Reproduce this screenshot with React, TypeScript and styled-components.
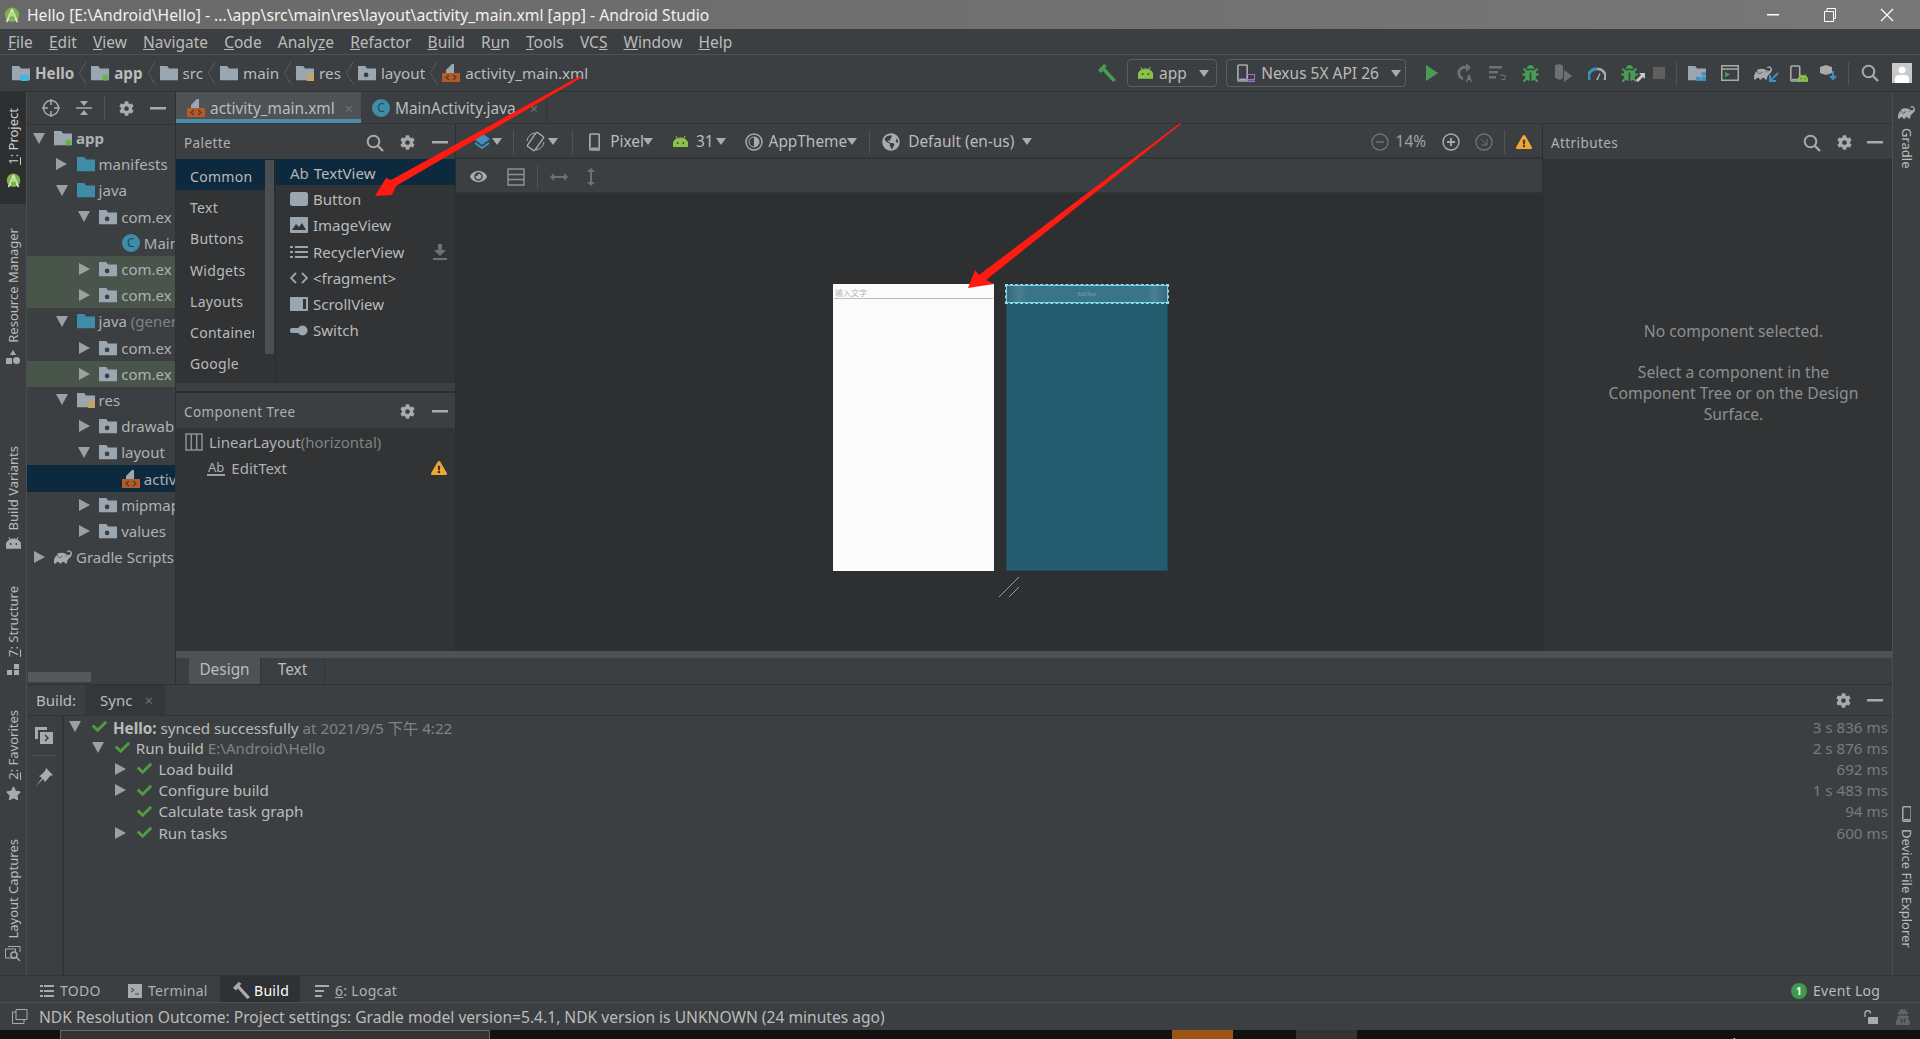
import React from 'react';
import styled, { createGlobalStyle } from 'styled-components';
import { FaCog, FaStar, FaGlobeAmericas, FaCheck, FaEye, FaUserSecret, FaBug, FaExclamationTriangle } from 'react-icons/fa';
import { SiGradle } from 'react-icons/si';

const FONT = `"Noto Sans", "Noto Sans CJK SC", sans-serif`;

const Global = createGlobalStyle`
  html, body { margin: 0; padding: 0; background: #3c3f41; }
  * { box-sizing: border-box; }
  body { font-family: ${FONT}; color: #bbbbbb; font-size: 15px; }
`;

const Page = styled.div`
  position: relative;
  width: 1920px;
  height: 1039px;
  overflow: hidden;
  display: flex;
  flex-direction: column;
  background: #3c3f41;
`;

const TitleBar = styled.div`
  height: 29px;
  flex: none;
  display: flex;
  align-items: center;
  padding: 0 5px 0 4px;
  background: linear-gradient(90deg, #696969, #777777);
  color: #f0f0f0;
  font-size: 15.7px;
  gap: 7px;
`;

const WindowButtons = styled.div`
  margin-left: auto;
  display: flex;
  color: #fff;
`;

const WindowButton = styled.div`
  width: 57px;
  height: 29px;
  display: flex;
  align-items: center;
  justify-content: center;
`;

const MenuBar = styled.div`
  height: 26px;
  flex: none;
  display: flex;
  align-items: center;
  gap: 16.2px;
  padding-left: 8px;
  font-size: 15.5px;
  border-bottom: 1px solid #515151;
`;

const NavBar = styled.div`
  height: 37px;
  flex: none;
  display: flex;
  align-items: center;
  padding-left: 12px;
  border-bottom: 1px solid #2f3133;
  font-size: 15.2px;
`;

const Crumb = styled.span<{ $bold?: boolean }>`
  display: flex;
  align-items: center;
  gap: 5px;
  font-weight: ${(p) => (p.$bold ? 700 : 400)};
`;

const CrumbSep = styled.span`
  width: 7px;
  height: 22px;
  margin: 0 5px;
  background: linear-gradient(to bottom right, transparent 48%, #55585a 48%, #55585a 56%, transparent 56%) top / 100% 50% no-repeat,
    linear-gradient(to top right, transparent 48%, #55585a 48%, #55585a 56%, transparent 56%) bottom / 100% 50% no-repeat;
`;

const NavRight = styled.div`
  margin-left: auto;
  display: flex;
  align-items: center;
  padding-right: 5px;
`;

const Combo = styled.div<{ $w: number }>`
  width: ${(p) => p.$w}px;
  height: 28px;
  margin-right: 9px;
  border: 1.5px solid #5b5e60;
  border-radius: 4px;
  display: flex;
  align-items: center;
  padding-left: 10px;
  gap: 6px;
  font-size: 15.5px;
  white-space: nowrap;
`;

const Slot = styled.div<{ $w?: number }>`
  width: ${(p) => p.$w ?? 33}px;
  flex: none;
  display: flex;
  align-items: center;
  justify-content: center;
`;

const VSep = styled.div<{ $h?: number; $m?: number }>`
  width: 1px;
  height: ${(p) => p.$h ?? 24}px;
  flex: none;
  margin: 0 ${(p) => p.$m ?? 0}px;
  background: #515456;
`;

const Caret = styled.span<{ $dim?: boolean; $ml?: number }>`
  width: 0;
  height: 0;
  flex: none;
  margin-left: ${(p) => p.$ml ?? 0}px;
  border-left: 5.5px solid transparent;
  border-right: 5.5px solid transparent;
  border-top: 7px solid ${(p) => (p.$dim ? '#8a8d8f' : '#a9abad')};
`;

const Spacer = styled.span<{ $w?: number }>`
  flex: ${(p) => (p.$w ? 'none' : 1)};
  width: ${(p) => p.$w ?? 0}px;
`;

const PushRight = styled.span`
  margin-left: auto;
  display: flex;
`;

const Main = styled.div`
  height: 883px;
  flex: none;
  display: flex;
`;

const Stripe = styled.div<{ $right?: boolean }>`
  width: ${(p) => (p.$right ? 28 : 27)}px;
  flex: none;
  display: flex;
  flex-direction: column;
  align-items: center;
  border-${(p) => (p.$right ? 'left' : 'right')}: 1px solid #4c4f51;
  font-size: 13px;
`;

const StripeItem = styled.div<{ $top: number; $active?: boolean; $pad?: number }>`
  margin-top: ${(p) => p.$top}px;
  width: 100%;
  display: flex;
  flex-direction: column;
  align-items: center;
  gap: 7px;
  padding: ${(p) => p.$pad ?? 0}px 0;
  background: ${(p) => (p.$active ? '#2d2f31' : 'transparent')};
  color: ${(p) => (p.$active ? '#d0d0d0' : '#bbbbbb')};
`;

const SideText = styled.span<{ $down?: boolean }>`
  writing-mode: vertical-rl;
  transform: ${(p) => (p.$down ? 'none' : 'rotate(180deg)')};
  white-space: nowrap;
  line-height: 16px;
`;

const Center = styled.div`
  flex: 1;
  min-width: 0;
  display: flex;
  flex-direction: column;
`;

const Upper = styled.div`
  height: 592px;
  flex: none;
  display: flex;
`;

const ProjectPanel = styled.div`
  width: 149px;
  flex: none;
  position: relative;
  overflow: hidden;
  border-right: 1px solid #2f3133;
`;

const PanelHead = styled.div`
  height: 33px;
  display: flex;
  align-items: center;
  padding-left: 8px;
  border-bottom: 1px solid #323436;
`;

const TreeRow = styled.div<{ $level: number; $tone?: 'module' | 'selected' }>`
  height: 26.2px;
  display: flex;
  align-items: center;
  padding-left: ${(p) => 4 + p.$level * 22.6}px;
  white-space: nowrap;
  overflow: hidden;
  background: ${(p) => (p.$tone === 'module' ? '#49544a' : p.$tone === 'selected' ? '#0d293e' : 'transparent')};
`;

const ArrowSlot = styled.span`
  width: 16px;
  margin-right: 7px;
  flex: none;
  display: flex;
  justify-content: center;
`;

const Tri = styled.span<{ $open?: boolean }>`
  width: 0;
  height: 0;
  ${(p) =>
    p.$open
      ? `border-left:6px solid transparent;border-right:6px solid transparent;border-top:11px solid #9da0a2;`
      : `border-top:6px solid transparent;border-bottom:6px solid transparent;border-left:11px solid #9da0a2;`}
`;

const TreeLabel = styled.span`
  margin-left: 4px;
  color: #afb1b3;
`;

const HScroll = styled.div`
  position: absolute;
  left: 1px;
  bottom: 2px;
  width: 63px;
  height: 10px;
  background: #55585a;
`;

const Editor = styled.div`
  flex: 1;
  min-width: 0;
  display: flex;
  flex-direction: column;
`;

const Tabs = styled.div`
  height: 32px;
  flex: none;
  display: flex;
  border-bottom: 1px solid #323436;
`;

const Tab = styled.div<{ $active?: boolean }>`
  width: ${(p) => (p.$active ? 185 : 186)}px;
  display: flex;
  align-items: center;
  padding: 1px 0 0 11px;
  gap: 5px;
  background: ${(p) => (p.$active ? '#4e5254' : 'transparent')};
  box-shadow: ${(p) => (p.$active ? 'inset 0 -4px 0 #4a8dab' : 'none')};
  border-right: ${(p) => (p.$active ? 'none' : '1px solid #323436')};
  font-size: 15.4px;
`;

const Close = styled.span<{ $mr?: number }>`
  margin-left: auto;
  margin-right: ${(p) => p.$mr ?? 8}px;
  color: #6c6f71;
  font-size: 15px;
`;

const Surface = styled.div`
  height: 527px;
  flex: none;
  display: flex;
`;

const Side = styled.div`
  width: 280px;
  flex: none;
  display: flex;
  flex-direction: column;
  background: #313335;
  border-right: 1px solid #2b2d2e;
`;

const SideHead = styled.div`
  height: 35px;
  flex: none;
  display: flex;
  align-items: center;
  padding: 2px 0 0 8px;
  background: #3c3f41;
  font-size: 13.5px;
  letter-spacing: 0.4px;
  color: #afb1b3;
`;

const HeadTools = styled.div<{ $mr?: number }>`
  margin-left: auto;
  margin-right: ${(p) => p.$mr ?? 0}px;
  display: flex;
  align-items: center;
`;

const PaletteBody = styled.div`
  height: 224px;
  flex: none;
  display: flex;
`;

const Categories = styled.div`
  width: 100px;
  flex: none;
  position: relative;
  border-right: 1px solid #2b2d2e;
`;

const Category = styled.div<{ $on?: boolean }>`
  height: 31.3px;
  display: flex;
  align-items: center;
  padding: 3px 0 0 14px;
  font-size: 14px;
  letter-spacing: 0.3px;
  background: ${(p) => (p.$on ? '#0d293e' : 'transparent')};
  white-space: nowrap;
  overflow: hidden;
`;

const CategoryText = styled.span`
  display: block;
  width: 64px;
  overflow: hidden;
`;

const CatScroll = styled.div`
  position: absolute;
  right: 1px;
  top: 1px;
  width: 9px;
  height: 194px;
  background: #4b4f52;
`;

const Widgets = styled.div`
  flex: 1;
  min-width: 0;
`;

const Widget = styled.div<{ $on?: boolean }>`
  height: 26.2px;
  display: flex;
  align-items: center;
  padding: 2px 8px 0 14px;
  gap: 5px;
  background: ${(p) => (p.$on ? '#0d293e' : 'transparent')};
`;

const SideDivider = styled.div`
  height: 10px;
  flex: none;
  background: #3c3f41;
  border-bottom: 2px solid #2b2d2e;
`;

const CompList = styled.div`
  padding-top: 1.5px;
`;

const CompRow = styled.div<{ $indent?: boolean }>`
  height: 25.5px;
  display: flex;
  align-items: center;
  gap: 6px;
  padding: 0 8px 0 ${(p) => (p.$indent ? 31 : 9)}px;
  color: #afb1b3;
`;

const Grey = styled.span<{ $tight?: boolean }>`
  color: #808386;
  margin-left: ${(p) => (p.$tight ? -6 : 0)}px;
`;

const DesignArea = styled.div`
  flex: 1;
  min-width: 0;
  display: flex;
  flex-direction: column;
`;

const DesignBar = styled.div`
  height: 35px;
  flex: none;
  display: flex;
  align-items: center;
  padding-top: 2px;
  border-bottom: 2px solid #313335;
  font-size: 15.4px;
`;

const BarItem = styled.div<{ $gap?: number; $ml?: number }>`
  display: flex;
  align-items: center;
  gap: ${(p) => p.$gap ?? 4}px;
  margin-left: ${(p) => p.$ml ?? 0}px;
  white-space: nowrap;
`;

const ZoomTools = styled(BarItem)`
  margin-left: auto;
  margin-right: 10px;
`;

const ZoomValue = styled.span`
  color: #a0a3a5;
`;

const Canvas = styled.div`
  flex: 1;
  background: #2d2f31;
  padding: 89px 0 0 377px;
  border-top: 1px solid #2b2d2e;
`;

const Screens = styled.div`
  display: flex;
  gap: 12px;
`;

const Screen = styled.div`
  width: 161px;
  height: 287px;
  background: #fbfbfb;
  padding: 3px 1px 0;
`;

const Hint = styled.div`
  font-size: 8px;
  line-height: 10px;
  padding: 1px 1px 0;
  color: #b4b4b4;
  border-bottom: 1px solid #bdbdbd;
`;

const Blueprint = styled.div`
  width: 162px;
  height: 287px;
  background: #245c70;
  border: 1px solid #1f4b5c;
`;

const BlueField = styled.div`
  height: 18px;
  margin: 0 -1px;
  background: linear-gradient(90deg, #37687c 0, #4a7f92 8%, #3a7488 12%, #3a7488 88%, #4a7f92 92%, #37687c 100%);
  outline: 1px dashed #8fdcef;
  border: 1px solid #7ed0e4;
  display: flex;
  align-items: center;
  justify-content: center;
  font-size: 5px;
  color: #6fa4b3;
`;

const Resize = styled.div`
  margin: 5px 0 0 165px;
  width: 22px;
  height: 22px;
`;

const Attributes = styled.div`
  width: 350px;
  flex: none;
  display: flex;
  flex-direction: column;
  background: #313335;
  border-left: 1px solid #2b2d2e;
`;

const AttrBody = styled.div`
  flex: 1;
  padding: 162px 0 0 32px;
  text-align: center;
  color: #8c8f91;
  font-size: 15.7px;
  line-height: 21px;
`;

const AttrPara = styled.p`
  margin: 0 0 20px;
`;

const DesignTabs = styled.div`
  height: 33px;
  flex: none;
  display: flex;
  padding-left: 13px;
  border-top: 7px solid #4e5254;
  background: #3c3f41;
  font-size: 15.4px;
`;

const DesignTab = styled.div<{ $on?: boolean; $w: number }>`
  width: ${(p) => p.$w}px;
  display: flex;
  align-items: center;
  justify-content: center;
  padding-bottom: 4px;
  background: ${(p) => (p.$on ? '#4e5254' : 'transparent')};
  border-right: 1px solid #323436;
`;

const BuildPanel = styled.div`
  flex: 1;
  display: flex;
  flex-direction: column;
  border-top: 1px solid #2f3133;
`;

const BuildHead = styled.div`
  height: 31px;
  flex: none;
  display: flex;
  align-items: center;
  padding-left: 9px;
  border-bottom: 1px solid #323436;
`;

const SyncTab = styled.div`
  margin-left: 9px;
  height: 100%;
  width: 80px;
  display: flex;
  align-items: center;
  padding-left: 15px;
  background: #34373a;
`;

const BuildBody = styled.div`
  flex: 1;
  display: flex;
`;

const Actions = styled.div`
  width: 37px;
  flex: none;
  display: flex;
  flex-direction: column;
  align-items: center;
  padding-top: 11px;
  padding-right: 2px;
  border-right: 2px solid #323436;
`;

const ActionSep = styled.div`
  width: 24px;
  height: 1px;
  margin: 11px 0 12px;
  background: #515456;
`;

const BuildRows = styled.div`
  flex: 1;
  padding-right: 4px;
  font-size: 15.2px;
`;

const BuildRow = styled.div<{ $level: number }>`
  height: 21.2px;
  display: flex;
  align-items: center;
  padding-left: ${(p) => 3 + p.$level * 22.7}px;
  white-space: nowrap;
`;

const BuildArrow = styled.span`
  width: 16px;
  margin-right: 9px;
  flex: none;
  display: flex;
  justify-content: center;
`;

const Ok = styled.span`
  width: 16px;
  margin-right: 5px;
  flex: none;
  display: flex;
  color: #4f9c45;
`;

const Duration = styled.span`
  margin-left: auto;
  color: #787b7d;
`;

const BottomTools = styled.div`
  height: 28px;
  flex: none;
  display: flex;
  align-items: stretch;
  padding-left: 40px;
  font-size: 14px;
  letter-spacing: 0.3px;
  border-top: 1px solid #323436;
  border-bottom: 1px solid #4c4f51;
`;

const ToolTab = styled.div<{ $on?: boolean; $w: number; $ml?: number }>`
  width: ${(p) => p.$w}px;
  margin-left: ${(p) => p.$ml ?? 0}px;
  display: flex;
  align-items: center;
  gap: ${(p) => (p.$on ? 3 : 6)}px;
  padding-left: ${(p) => (p.$on ? 12 : 0)}px;
  padding-top: 3px;
  background: ${(p) => (p.$on ? '#2f3234' : 'transparent')};
  color: ${(p) => (p.$on ? '#ffffff' : '#afb1b3')};
`;

const EventLog = styled.div`
  margin-left: auto;
  width: 129px;
  padding-top: 3px;
  display: flex;
  align-items: center;
  gap: 6px;
`;

const Badge = styled.span`
  width: 16px;
  height: 16px;
  border-radius: 50%;
  background: #3f9a4f;
  color: #fff;
  font-size: 10px;
  font-weight: 700;
  display: flex;
  align-items: center;
  justify-content: center;
`;

const StatusBar = styled.div`
  height: 27px;
  flex: none;
  display: flex;
  align-items: center;
  padding-left: 12px;
  gap: 11px;
  font-size: 15.6px;
`;

const StatusRight = styled.div`
  margin-left: auto;
  display: flex;
  align-items: center;
  gap: 17px;
  padding-right: 9px;
`;

const Taskbar = styled.div`
  height: 9px;
  flex: none;
  display: flex;
  background: #111111;
  overflow: hidden;
  position: relative;
`;

const TaskItem = styled.div<{ $w: number; $ml: number; $bg: string; $line?: boolean }>`
  width: ${(p) => p.$w}px;
  margin-left: ${(p) => p.$ml}px;
  background: ${(p) => p.$bg};
  ${(p) => (p.$line ? 'border: 1px solid #6a6a6a; border-bottom: none;' : '')}
`;

const Clock = styled.span`
  margin-left: 358px;
  margin-top: 6px;
  color: #ffffff;
  font-size: 15px;
  line-height: 18px;
  white-space: nowrap;
`;

const ArrowLayer = styled.svg`
  position: absolute;
  inset: 0;
  width: 1920px;
  height: 1039px;
  pointer-events: none;
`;

const ClassBadge = styled.span`
  width: 18px;
  height: 18px;
  border-radius: 50%;
  flex: none;
  background: #3f8ca8;
  color: #21495a;
  font-size: 12px;
  line-height: 18px;
  text-align: center;
`;

const AbMark = styled.span<{ $under?: boolean }>`
  font-size: ${(p) => (p.$under ? 13 : 15)}px;
  line-height: 14px;
  color: #afb1b3;
  ${(p) => (p.$under ? 'border-bottom: 2px solid #9da0a2; padding: 0 1px;' : '')}
`;

const IconWrap = styled.span`
  display: flex;
  position: relative;
  flex: none;
`;

const TinyBadge = styled.span`
  position: absolute;
  right: -7px;
  bottom: 0;
  display: flex;
`;

const G = '#a8abad';
const M = '#6e7072';

const Folder = ({ color = '#9aa7b0', dot, src, res, tea, grid, size = 18 }: { color?: string; dot?: boolean; src?: boolean; res?: boolean; tea?: boolean; grid?: boolean; size?: number }) => (
  <svg width={size} height={size * 0.9} viewBox="0 0 20 18" style={{ flex: 'none' }}>
    <path d="M0 1h8l2 3h10v13H0z" fill={color} />
    {dot && <circle cx="9" cy="11" r="2.6" fill="#3c3f41" />}
    {src && <circle cx="16" cy="14" r="3.4" fill="#62b543" />}
    {res && <path d="M12 10h8v2h-8zm0 3h8v2h-8zm0 3h8v2h-8z" fill="#d9a343" />}
    {tea && <path d="M9 11h10v4a3 3 0 0 1-3 3h-4a3 3 0 0 1-3-3z" fill="#40b6e0" />}
    {grid && <path d="M15 8h5v4h-5zM9 13h5v5H9zM15 13h5v5h-5z" fill="#3d8fc4" />}
  </svg>
);

const Xml = () => (
  <svg width="18" height="20" viewBox="0 0 18 20" style={{ flex: 'none' }}>
    <path d="M4 7l6-6h2v9H4z" fill="#9aa7b0" />
    <rect y="10" width="18" height="9" fill="#b95a25" />
    <path d="M7 12l-3 2.500 3 2.500M11 12l3 2.500-3 2.500" stroke="#3c3f41" strokeWidth="1.200" fill="none" />
  </svg>
);

const Droid = ({ w = 16, color = '#8bc34a' }: { w?: number; color?: string }) => (
  <svg width={w} height={w * 0.75} viewBox="0 0 16 12" style={{ flex: 'none' }}>
    <path d="M0 12V9a8 7 0 0 1 16 0v3z M3 0l2 4 M13 0l-2 4" fill={color} stroke={color} strokeWidth="1" />
    <circle cx="5" cy="7.500" r="1" fill="#3c3f41" />
    <circle cx="11" cy="7.500" r="1" fill="#3c3f41" />
  </svg>
);

const StudioLogo = ({ size = 16 }: { size?: number }) => (
  <svg width={size} height={size * 1.1} viewBox="0 0 20 22" style={{ flex: 'none' }}>
    <circle cx="10" cy="11" r="9" fill="#7cb342" />
    <path d="M10 4l6 14M10 4L4 18" stroke="#dfe3e5" strokeWidth="2" fill="none" />
    <path d="M5 13a5 5 0 0 1 10 0z" fill="#b7d98a" />
    <path d="M3 20l3-4M17 20l-3-4" stroke="#dfe3e5" strokeWidth="2" />
  </svg>
);

const Gear = () => <FaCog size={15} color={G} />;
const Minus = () => (
  <svg width="16" height="3" viewBox="0 0 16 3">
    <rect width="16" height="2.500" fill={G} />
  </svg>
);
const Search = () => (
  <svg width="18" height="18" viewBox="0 0 18 18">
    <circle cx="7.500" cy="7.500" r="5.800" fill="none" stroke={G} strokeWidth="2" />
    <path d="M11.500 11.500L17 17" stroke={G} strokeWidth="2.400" />
  </svg>
);
const Warn = () => <FaExclamationTriangle size={16} color="#f0a732" />;
const Elephant = ({ size = 18 }: { size?: number }) => <SiGradle size={size} color={G} />;

const Hammer = ({ color = '#499c54', size = 20 }: { color?: string; size?: number }) => (
  <svg width={size} height={size} viewBox="0 0 20 20" style={{ flex: 'none' }}>
    <path d="M1 7L7 1l3 2-2 2 11 12-3 2L6 8 4 10z" fill={color} />
  </svg>
);

const Rerun = () => (
  <svg width="17" height="20" viewBox="0 0 17 20">
    <path d="M10 3a7 7 0 1 0-3 14v-3a4 4 0 0 1 3-8v3l5-4.500L10 0z" fill={M} />
    <path d="M10 19l2-7h2l2 7h-1.500l-.5-2h-2l-.5 2z" fill={M} />
  </svg>
);

const ApplyLines = () => (
  <svg width="17" height="16" viewBox="0 0 17 16">
    <path d="M0 1h13v2.500H0zM0 6h9v2.500H0zM0 11h7v2.500H0z" fill={M} />
    <path d="M11 11l2-2v1.500h3v4h-4" stroke={M} fill="none" />
  </svg>
);

const Coverage = () => (
  <svg width="18" height="20" viewBox="0 0 18 20">
    <path d="M0 2l5-1 3 2v12l-3 2-5-2z" fill={M} />
    <path d="M9 7l8 6-8 6z" fill={M} />
  </svg>
);

const Gauge = () => (
  <svg width="18" height="13" viewBox="0 0 18 13">
    <path d="M1.500 13a7.500 7.500 0 0 1 7.500-11" stroke="#3d8fc4" strokeWidth="3" fill="none" />
    <path d="M9 2a7.500 7.500 0 0 1 7.500 11" stroke={G} strokeWidth="2.500" fill="none" />
    <path d="M8 13l3.500-7 1 .5L10 13z" fill={G} />
  </svg>
);

const DeviceIcon = ({ h = 18, badge }: { h?: number; badge?: React.ReactNode }) => (
  <IconWrap>
    <svg width={h * 0.62} height={h} viewBox="0 0 10 16">
      <rect x="0.800" y="0.800" width="8.400" height="14.400" rx="1" fill="none" stroke={G} strokeWidth="1.500" />
      <rect x="2" y="13" width="6" height="1.500" fill={G} />
    </svg>
    {badge}
  </IconWrap>
);

const Ctl = ({ kind }: { kind: 'layers' | 'rotate' | 'theme' | 'grid' }) => {
  if (kind === 'layers')
    return (
      <svg width="16" height="17" viewBox="0 0 16 17">
        <path d="M8 0l8 6-8 6-8-6z" fill="#3d8fc4" />
        <path d="M1 10l7 5 7-5" stroke="#3d8fc4" strokeWidth="2" fill="none" />
      </svg>
    );
  if (kind === 'rotate')
    return (
      <svg width="21" height="21" viewBox="0 0 21 21">
        <rect x="6" y="2" width="9" height="17" rx="1.500" transform="rotate(35 10.500 10.500)" fill="none" stroke={G} strokeWidth="1.400" />
        <path d="M2 10a9 9 0 0 1 8-8M19 11a9 9 0 0 1-8 8" stroke={G} fill="none" />
      </svg>
    );
  if (kind === 'theme')
    return (
      <svg width="18" height="18" viewBox="0 0 18 18">
        <circle cx="9" cy="9" r="8" fill="none" stroke={G} strokeWidth="1.500" />
        <path d="M9 4a5 5 0 0 1 0 10z" fill={G} />
        <circle cx="9" cy="9" r="5" fill="none" stroke={G} />
      </svg>
    );
  return (
    <svg width="18" height="18" viewBox="0 0 18 18">
      <rect x="1" y="1" width="16" height="16" fill="none" stroke="#87939a" strokeWidth="1.500" />
      <path d="M1 6.500h16M1 11.500h16" stroke="#87939a" strokeWidth="1.500" />
    </svg>
  );
};

const Shape = ({ kind }: { kind: 'button' | 'image' | 'list' | 'code' | 'scroll' | 'switch' }) => (
  <svg width="18" height="18" viewBox="0 0 18 18" style={{ flex: 'none' }}>
    {kind === 'button' && <rect y="2" width="18" height="14" rx="2.500" fill="#9aa7b0" />}
    {kind === 'image' && (
      <>
        <rect y="1" width="18" height="16" rx="1" fill="#9aa7b0" />
        <path d="M2 14l4-6 3 3 3-4 4 7z" fill="#313335" />
      </>
    )}
    {kind === 'list' && <path d="M0 3h3v2H0zM5 3h13v2H5zM0 8h3v2H0zM5 8h13v2H5zM0 13h3v2H0zM5 13h13v2H5z" fill="#9aa7b0" />}
    {kind === 'code' && <path d="M6 4L1 9l5 5M12 4l5 5-5 5" stroke="#9aa7b0" strokeWidth="1.800" fill="none" />}
    {kind === 'scroll' && (
      <>
        <rect y="2" width="18" height="14" rx="1" fill="#9aa7b0" />
        <rect x="13" y="4" width="3" height="10" fill="#313335" />
      </>
    )}
    {kind === 'switch' && (
      <>
        <rect y="7" width="10" height="5" rx="2" fill="#9aa7b0" />
        <circle cx="12.500" cy="9.500" r="5" fill="#9aa7b0" />
      </>
    )}
  </svg>
);

const Tree = () => (
  <>
    <TreeRow $level={0}><ArrowSlot><Tri $open /></ArrowSlot><Folder src /><TreeLabel><b>app</b></TreeLabel></TreeRow>
    <TreeRow $level={1}><ArrowSlot><Tri /></ArrowSlot><Folder color="#3f8ca8" /><TreeLabel>manifests</TreeLabel></TreeRow>
    <TreeRow $level={1}><ArrowSlot><Tri $open /></ArrowSlot><Folder color="#3f8ca8" /><TreeLabel>java</TreeLabel></TreeRow>
    <TreeRow $level={2}><ArrowSlot><Tri $open /></ArrowSlot><Folder dot /><TreeLabel>com.ex</TreeLabel></TreeRow>
    <TreeRow $level={3}><ArrowSlot /><ClassBadge>C</ClassBadge><TreeLabel>Main</TreeLabel></TreeRow>
    <TreeRow $level={2} $tone="module"><ArrowSlot><Tri /></ArrowSlot><Folder dot /><TreeLabel>com.ex</TreeLabel></TreeRow>
    <TreeRow $level={2} $tone="module"><ArrowSlot><Tri /></ArrowSlot><Folder dot /><TreeLabel>com.ex</TreeLabel></TreeRow>
    <TreeRow $level={1}><ArrowSlot><Tri $open /></ArrowSlot><Folder color="#3f8ca8" /><TreeLabel>java <Grey>(gener</Grey></TreeLabel></TreeRow>
    <TreeRow $level={2}><ArrowSlot><Tri /></ArrowSlot><Folder dot /><TreeLabel>com.ex</TreeLabel></TreeRow>
    <TreeRow $level={2} $tone="module"><ArrowSlot><Tri /></ArrowSlot><Folder dot /><TreeLabel>com.ex</TreeLabel></TreeRow>
    <TreeRow $level={1}><ArrowSlot><Tri $open /></ArrowSlot><Folder res /><TreeLabel>res</TreeLabel></TreeRow>
    <TreeRow $level={2}><ArrowSlot><Tri /></ArrowSlot><Folder dot /><TreeLabel>drawab</TreeLabel></TreeRow>
    <TreeRow $level={2}><ArrowSlot><Tri $open /></ArrowSlot><Folder dot /><TreeLabel>layout</TreeLabel></TreeRow>
    <TreeRow $level={3} $tone="selected"><ArrowSlot /><Xml /><TreeLabel>activ</TreeLabel></TreeRow>
    <TreeRow $level={2}><ArrowSlot><Tri /></ArrowSlot><Folder dot /><TreeLabel>mipmap</TreeLabel></TreeRow>
    <TreeRow $level={2}><ArrowSlot><Tri /></ArrowSlot><Folder dot /><TreeLabel>values</TreeLabel></TreeRow>
    <TreeRow $level={0}><ArrowSlot><Tri /></ArrowSlot><Elephant /><TreeLabel>Gradle Scripts</TreeLabel></TreeRow>
  </>
);

const App = () => (
  <Page>
    <Global />
    <TitleBar>
      <StudioLogo size={16} />
      <span>Hello [E:\Android\Hello] - ...\app\src\main\res\layout\activity_main.xml [app] - Android Studio</span>
      <WindowButtons>
        <WindowButton><svg width="12" height="2"><rect width="12" height="1.500" fill="#fff" /></svg></WindowButton>
        <WindowButton><svg width="12" height="14" viewBox="0 0 12 14"><path d="M.500 3.500h9v10h-9zM3 3V.500h8.500v10H10" stroke="#fff" fill="none" /></svg></WindowButton>
        <WindowButton><svg width="14" height="14" viewBox="0 0 14 14"><path d="M1 1l12 12M13 1L1 13" stroke="#fff" strokeWidth="1.200" /></svg></WindowButton>
      </WindowButtons>
    </TitleBar>

    <MenuBar>
      <span><u>F</u>ile</span>
      <span><u>E</u>dit</span>
      <span><u>V</u>iew</span>
      <span><u>N</u>avigate</span>
      <span><u>C</u>ode</span>
      <span>Analy<u>z</u>e</span>
      <span><u>R</u>efactor</span>
      <span><u>B</u>uild</span>
      <span>R<u>u</u>n</span>
      <span><u>T</u>ools</span>
      <span>VC<u>S</u></span>
      <span><u>W</u>indow</span>
      <span><u>H</u>elp</span>
    </MenuBar>

    <NavBar>
      <Crumb $bold><Folder tea />Hello</Crumb><CrumbSep />
      <Crumb $bold><Folder src />app</Crumb><CrumbSep />
      <Crumb><Folder />src</Crumb><CrumbSep />
      <Crumb><Folder />main</Crumb><CrumbSep />
      <Crumb><Folder res />res</Crumb><CrumbSep />
      <Crumb><Folder dot />layout</Crumb><CrumbSep />
      <Crumb><Xml />activity_main.xml</Crumb>
      <NavRight>
        <Slot $w={41}><Hammer /></Slot>
        <Combo $w={90}><Droid w={15} /><span>app</span><Spacer /><Caret /><Spacer $w={2} /></Combo>
        <Combo $w={180}>
          <DeviceIcon h={18} badge={<TinyBadge><svg width="9" height="8"><rect x="0.500" y="0.500" width="8" height="5" fill="none" stroke="#a571c7" /><rect y="6.500" width="9" height="1.500" fill="#a571c7" /></svg></TinyBadge>} />
          <Spacer $w={1} /><span>Nexus 5X API 26</span><Spacer /><Caret /><Spacer $w={2} />
        </Combo>
        <Slot><svg width="12" height="16" viewBox="0 0 12 16"><path d="M0 0l12 8-12 8z" fill="#499c54" /></svg></Slot>
        <Slot><Rerun /></Slot>
        <Slot><ApplyLines /></Slot>
        <Slot><FaBug size={17} color="#499c54" /></Slot>
        <Slot><Coverage /></Slot>
        <Slot><Gauge /></Slot>
        <Slot>
          <IconWrap>
            <FaBug size={17} color="#499c54" />
            <TinyBadge><svg width="9" height="9" viewBox="0 0 9 9"><path d="M9 0v6L7 4 2 9 0 7l5-5-2-2z" fill="#c9c9c9" /></svg></TinyBadge>
          </IconWrap>
        </Slot>
        <Slot $w={26}><svg width="12" height="12"><rect width="12" height="12" fill="#5f5f5f" /></svg></Slot>
        <VSep $h={23} $m={3.5} />
        <Slot><Folder size={18} grid /></Slot>
        <Slot><svg width="18" height="16" viewBox="0 0 18 16"><rect x="0.750" y="0.750" width="16.500" height="14.500" fill="none" stroke={G} strokeWidth="1.500" /><path d="M1 4h16" stroke={G} strokeWidth="1.500" /><path d="M4 6.500l5 3-5 3z" fill="#499c54" /></svg></Slot>
        <Slot>
          <IconWrap>
            <Elephant />
            <TinyBadge><svg width="10" height="10" viewBox="0 0 10 10"><path d="M9 1L2 8M1 3v6h6" stroke="#3d8fc4" strokeWidth="2" fill="none" /></svg></TinyBadge>
          </IconWrap>
        </Slot>
        <Slot><DeviceIcon h={17} badge={<TinyBadge><Droid w={10} /></TinyBadge>} /></Slot>
        <Slot><svg width="18" height="18" viewBox="0 0 18 18"><path d="M6 1l6 2v6l-6 2-6-2V3z" fill={G} /><path d="M13 7v8m-3-3l3 3 3-3" stroke="#3d8fc4" strokeWidth="2" fill="none" /></svg></Slot>
        <VSep $h={23} $m={3} />
        <Slot $w={36}><Search /></Slot>
        <Slot $w={27}><svg width="20" height="20" viewBox="0 0 20 20"><rect width="20" height="20" fill="#c9c9c9" /><circle cx="10" cy="7" r="3.500" fill="#fff" /><path d="M3 20v-4a4 4 0 0 1 4-4h6a4 4 0 0 1 4 4v4z" fill="#fff" /></svg></Slot>
      </NavRight>
    </NavBar>

    <Main>
      <Stripe>
        <StripeItem $top={0} $active $pad={16}>
          <SideText><u>1</u>: Project</SideText>
          <StudioLogo size={15} />
        </StripeItem>
        <StripeItem $top={24}>
          <SideText>Resource Manager</SideText>
          <svg width="14" height="14" viewBox="0 0 14 14"><path d="M7 0l3 5H4z M0 8h6v6H0z" fill={G} /><circle cx="10.500" cy="10.500" r="3.500" fill={G} /></svg>
        </StripeItem>
        <StripeItem $top={82}>
          <SideText>Build Variants</SideText>
          <Droid w={15} color={G} />
        </StripeItem>
        <StripeItem $top={37}>
          <SideText><u>7</u>: Structure</SideText>
          <svg width="12" height="11" viewBox="0 0 12 11"><path d="M7 0h5v5H7zM0 6h5v5H0zM7 6h5v5H7z" fill={G} /></svg>
        </StripeItem>
        <StripeItem $top={35}>
          <SideText><u>2</u>: Favorites</SideText>
          <FaStar size={15} color={G} />
        </StripeItem>
        <StripeItem $top={38}>
          <SideText>Layout Captures</SideText>
          <svg width="16" height="15" viewBox="0 0 16 15"><path d="M3 .500h12V6M.500 3h10v9H.500z" stroke={G} fill="none" /><circle cx="9" cy="9" r="3" stroke={G} strokeWidth="1.500" fill="#3c3f41" /><path d="M11 11l4 4" stroke={G} strokeWidth="1.500" /></svg>
        </StripeItem>
      </Stripe>

      <Center>
        <Upper>
          <ProjectPanel>
            <PanelHead>
              <Slot $w={32}><svg width="18" height="18" viewBox="0 0 18 18"><circle cx="9" cy="9" r="7.500" fill="none" stroke={G} strokeWidth="1.500" /><path d="M9 0v6M9 12v6M0 9h6M12 9h6" stroke={G} strokeWidth="1.500" /></svg></Slot>
              <Slot $w={33}><svg width="16" height="18" viewBox="0 0 16 18"><path d="M0 8.200h16v1.600H0zM8 7L4 2h8zM8 11l-4 5h8z" fill={G} /></svg></Slot>
              <VSep $m={4} />
              <Slot $w={34}><Gear /></Slot>
              <Slot $w={30}><Minus /></Slot>
            </PanelHead>
            <Tree />
            <HScroll />
          </ProjectPanel>

          <Editor>
            <Tabs>
              <Tab $active><Xml />activity_main.xml<Close>×</Close></Tab>
              <Tab><ClassBadge>C</ClassBadge>MainActivity.java<Close>×</Close></Tab>
            </Tabs>
            <Surface>
              <Side>
                <SideHead>
                  Palette
                  <HeadTools>
                    <Slot><Search /></Slot>
                    <Slot><Gear /></Slot>
                    <Slot $w={31}><Minus /></Slot>
                  </HeadTools>
                </SideHead>
                <PaletteBody>
                  <Categories>
                    <Category $on>Common</Category>
                    <Category>Text</Category>
                    <Category>Buttons</Category>
                    <Category>Widgets</Category>
                    <Category>Layouts</Category>
                    <Category><CategoryText>Container</CategoryText></Category>
                    <Category>Google</Category>
                    <CatScroll />
                  </Categories>
                  <Widgets>
                    <Widget $on><AbMark>Ab</AbMark>TextView</Widget>
                    <Widget><Shape kind="button" />Button</Widget>
                    <Widget><Shape kind="image" />ImageView</Widget>
                    <Widget><Shape kind="list" />RecyclerView<PushRight><svg width="14" height="16" viewBox="0 0 14 16"><path d="M5 0h4v6h4l-6 6-6-6h4zM0 14h14v2H0z" fill={M} /></svg></PushRight></Widget>
                    <Widget><Shape kind="code" />&lt;fragment&gt;</Widget>
                    <Widget><Shape kind="scroll" />ScrollView</Widget>
                    <Widget><Shape kind="switch" />Switch</Widget>
                  </Widgets>
                </PaletteBody>
                <SideDivider />
                <SideHead>
                  Component Tree
                  <HeadTools>
                    <Slot><Gear /></Slot>
                    <Slot $w={31}><Minus /></Slot>
                  </HeadTools>
                </SideHead>
                <CompList>
                  <CompRow><svg width="18" height="18" viewBox="0 0 18 18"><path d="M1 1h16v16H1zM6.300 1v16M11.700 1v16" stroke="#87939a" strokeWidth="1.500" fill="none" /></svg>LinearLayout<Grey $tight>(horizontal)</Grey></CompRow>
                  <CompRow $indent><AbMark $under>Ab</AbMark>EditText<PushRight><Warn /></PushRight></CompRow>
                </CompList>
              </Side>

              <DesignArea>
                <DesignBar>
                  <BarItem $ml={18} $gap={2}><Ctl kind="layers" /><Caret /></BarItem>
                  <VSep $m={11} />
                  <BarItem $gap={2}><Ctl kind="rotate" /><Caret /></BarItem>
                  <VSep $m={14} />
                  <BarItem $ml={2} $gap={10}><DeviceIcon h={18} />Pixel<Caret $ml={-11} /></BarItem>
                  <BarItem $ml={20} $gap={8}><Droid w={15} />31<Caret $ml={-6} /></BarItem>
                  <BarItem $ml={19} $gap={6}><Ctl kind="theme" />AppTheme<Caret $ml={-6} /></BarItem>
                  <VSep $m={12} />
                  <BarItem $gap={8}><FaGlobeAmericas size={18} color={G} />Default (en-us)<Caret /></BarItem>
                  <ZoomTools $gap={7}>
                    <svg width="18" height="18" viewBox="0 0 18 18"><circle cx="9" cy="9" r="8" fill="none" stroke={M} strokeWidth="1.500" /><path d="M5 9h8" stroke={M} strokeWidth="1.500" /></svg>
                    <ZoomValue>14%</ZoomValue>
                    <Spacer $w={2} />
                    <svg width="18" height="18" viewBox="0 0 18 18"><circle cx="9" cy="9" r="8" fill="none" stroke={G} strokeWidth="1.500" /><path d="M5 9h8M9 5v8" stroke={G} strokeWidth="1.800" /></svg>
                    <Spacer $w={1} />
                    <svg width="18" height="18" viewBox="0 0 18 18"><circle cx="9" cy="9" r="8" fill="none" stroke={M} strokeWidth="1.500" /><path d="M6 6l6 6M12 6v6H6" stroke={M} fill="none" /></svg>
                    <VSep $m={4} />
                    <Warn />
                  </ZoomTools>
                </DesignBar>
                <DesignBar>
                  <Slot $w={44}><FaEye size={17} color={G} /></Slot>
                  <Slot $w={32}><Ctl kind="grid" /></Slot>
                  <VSep $m={5} />
                  <Slot $w={32}><svg width="18" height="10" viewBox="0 0 18 10"><path d="M0 5l4-4v3h10V1l4 4-4 4V6H4v3z" fill={M} /></svg></Slot>
                  <Slot $w={32}><svg width="10" height="18" viewBox="0 0 10 18"><path d="M5 0l4 4H6v10h3l-4 4-4-4h3V4H1z" fill={M} /></svg></Slot>
                </DesignBar>
                <Canvas>
                  <Screens>
                    <Screen><Hint>输入文字</Hint></Screen>
                    <Blueprint><BlueField>EditText</BlueField></Blueprint>
                  </Screens>
                  <Resize>
                    <svg width="22" height="22" viewBox="0 0 22 22"><path d="M1 21L21 1M11 21l10-10" stroke="#9a9c9e" strokeWidth="1" /></svg>
                  </Resize>
                </Canvas>
              </DesignArea>

              <Attributes>
                <SideHead>
                  Attributes
                  <HeadTools $mr={2}>
                    <Slot><Search /></Slot>
                    <Slot $w={32}><Gear /></Slot>
                    <Slot $w={30}><Minus /></Slot>
                  </HeadTools>
                </SideHead>
                <AttrBody>
                  <AttrPara>No component selected.</AttrPara>
                  <AttrPara>Select a component in the<br />Component Tree or on the Design<br />Surface.</AttrPara>
                </AttrBody>
              </Attributes>
            </Surface>
            <DesignTabs>
              <DesignTab $on $w={72}>Design</DesignTab>
              <DesignTab $w={64}>Text</DesignTab>
            </DesignTabs>
          </Editor>
        </Upper>

        <BuildPanel>
          <BuildHead>
            Build:
            <SyncTab>Sync<Close $mr={12}>×</Close></SyncTab>
            <HeadTools $mr={1}>
              <Slot $w={32}><Gear /></Slot>
              <Slot $w={32}><Minus /></Slot>
            </HeadTools>
          </BuildHead>
          <BuildBody>
            <Actions>
              <svg width="18" height="17" viewBox="0 0 18 17"><path d="M0 0h12v3H3v9H0z" fill={G} /><rect x="5" y="5" width="13" height="12" fill={G} /><path d="M10 8l3 3-3 3" stroke="#3c3f41" strokeWidth="1.500" fill="none" /></svg>
              <ActionSep />
              <svg width="18" height="18" viewBox="0 0 18 18"><path d="M11 0l7 7-3 1-4 5-1 1-2-3-7 7 6-8-3-2 2-1 4-4z" fill={G} /></svg>
            </Actions>
            <BuildRows>
              <BuildRow $level={0}>
                <BuildArrow><Tri $open /></BuildArrow><Ok><FaCheck size={15} /></Ok>
                <span><b>Hello:</b> synced successfully <Grey>at 2021/9/5 下午 4:22</Grey></span>
                <Duration>3 s 836 ms</Duration>
              </BuildRow>
              <BuildRow $level={1}>
                <BuildArrow><Tri $open /></BuildArrow><Ok><FaCheck size={15} /></Ok>
                <span>Run build <Grey>E:\Android\Hello</Grey></span>
                <Duration>2 s 876 ms</Duration>
              </BuildRow>
              <BuildRow $level={2}>
                <BuildArrow><Tri /></BuildArrow><Ok><FaCheck size={15} /></Ok>
                <span>Load build</span>
                <Duration>692 ms</Duration>
              </BuildRow>
              <BuildRow $level={2}>
                <BuildArrow><Tri /></BuildArrow><Ok><FaCheck size={15} /></Ok>
                <span>Configure build</span>
                <Duration>1 s 483 ms</Duration>
              </BuildRow>
              <BuildRow $level={2}>
                <BuildArrow /><Ok><FaCheck size={15} /></Ok>
                <span>Calculate task graph</span>
                <Duration>94 ms</Duration>
              </BuildRow>
              <BuildRow $level={2}>
                <BuildArrow><Tri /></BuildArrow><Ok><FaCheck size={15} /></Ok>
                <span>Run tasks</span>
                <Duration>600 ms</Duration>
              </BuildRow>
            </BuildRows>
          </BuildBody>
        </BuildPanel>
      </Center>

      <Stripe $right>
        <StripeItem $top={12}>
          <Elephant size={17} />
          <SideText $down>Gradle</SideText>
        </StripeItem>
        <StripeItem $top={637}>
          <DeviceIcon h={16} />
          <SideText $down>Device File Explorer</SideText>
        </StripeItem>
      </Stripe>
    </Main>

    <BottomTools>
      <ToolTab $w={88}><svg width="14" height="12" viewBox="0 0 14 12"><path d="M0 0h3v2H0zM4 0h10v2H4zM0 5h3v2H0zM4 5h10v2H4zM0 10h3v2H0zM4 10h10v2H4z" fill={G} /></svg>TODO</ToolTab>
      <ToolTab $w={92}><svg width="14" height="14" viewBox="0 0 14 14"><rect width="14" height="14" fill={G} /><path d="M3 4l3 2-3 2M7 10h4" stroke="#3c3f41" fill="none" /></svg>Terminal</ToolTab>
      <ToolTab $on $w={80}><Hammer color={G} size={19} />Build</ToolTab>
      <ToolTab $w={120} $ml={15}><svg width="14" height="12" viewBox="0 0 14 12"><path d="M0 0h14v2H0zM0 5h9v2H0zM0 10h7v2H0z" fill={G} /></svg><span><u>6</u>: Logcat</span></ToolTab>
      <EventLog><Badge>1</Badge>Event Log</EventLog>
    </BottomTools>

    <StatusBar>
      <svg width="16" height="15" viewBox="0 0 16 15"><path d="M4 .500h11v10H4zM4 3H.500v11.500H12V11" stroke={G} fill="none" /></svg>
      <span>NDK Resolution Outcome: Project settings: Gradle model version=5.4.1, NDK version is UNKNOWN (24 minutes ago)</span>
      <StatusRight>
        <svg width="14" height="14" viewBox="0 0 14 14"><path d="M1 7V3.500a2.800 2.800 0 0 1 5.600 0" stroke={G} strokeWidth="1.400" fill="none" /><rect x="4" y="7" width="10" height="7" fill={G} /></svg>
        <FaUserSecret size={16} color="#626467" />
      </StatusRight>
    </StatusBar>

    <Taskbar>
      <TaskItem $ml={60} $w={430} $bg="#333333" $line />
      <TaskItem $ml={682} $w={61} $bg="#9a5418" />
      <TaskItem $ml={63} $w={61} $bg="#333333" />
      <Clock>下午 4:47</Clock>
    </Taskbar>

    <ArrowLayer viewBox="0 0 1920 1039">
      <polygon points="581,78 396,186 392,195 375,196 386,178 391,180 580,76" fill="#ff1a12" />
      <polygon points="1181,124 986,280 994,284 968,288 975,270 979,275 1180,123" fill="#ff1a12" />
    </ArrowLayer>
  </Page>
);

export default App;
